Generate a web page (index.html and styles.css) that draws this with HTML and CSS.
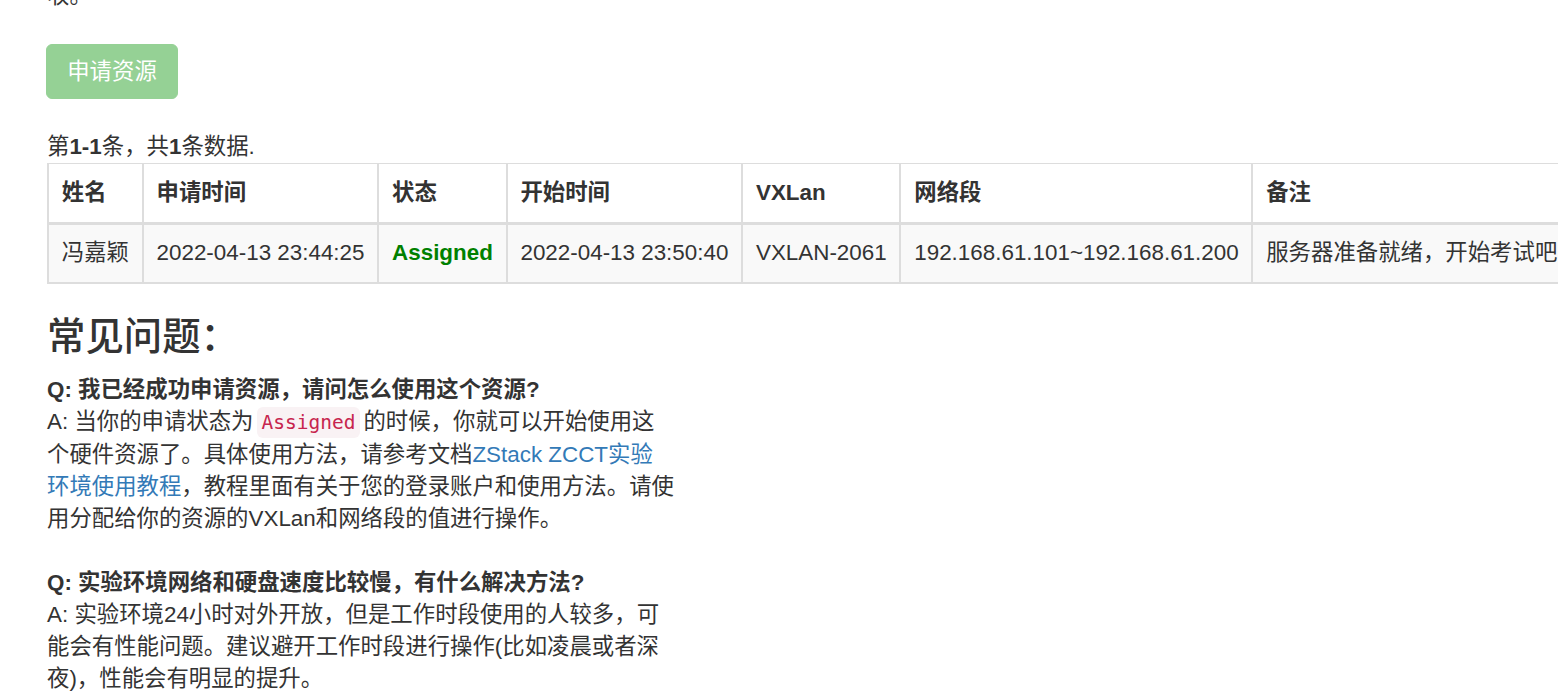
FILE: index.html
```html
<!DOCTYPE html>
<html lang="zh-CN">
<head>
<meta charset="utf-8">
<title>资源申请</title>
<link rel="stylesheet" href="styles.css">
</head>
<body>
<div class="page">
  <p class="intro">收。</p>
  <div class="actions">
    <button class="btn-apply" type="button" disabled>申请资源</button>
  </div>
  <div class="summary">第<b>1-1</b>条，共<b>1</b>条数据.</div>
  <table class="grid">
    <thead>
      <tr>
        <th>姓名</th>
        <th>申请时间</th>
        <th>状态</th>
        <th>开始时间</th>
        <th>VXLan</th>
        <th>网络段</th>
        <th>备注</th>
      </tr>
    </thead>
    <tbody>
      <tr>
        <td>冯嘉颖</td>
        <td>2022-04-13 23:44:25</td>
        <td><span class="st-assigned">Assigned</span></td>
        <td>2022-04-13 23:50:40</td>
        <td>VXLAN-2061</td>
        <td>192.168.61.101~192.168.61.200</td>
        <td>服务器准备就绪，开始考试吧</td>
      </tr>
    </tbody>
  </table>
  <h3 class="faq-title">常见问题：</h3>
  <div class="faq">
    <p><b>Q: 我已经成功申请资源，请问怎么使用这个资源?</b><br>A: 当你的申请状态为<code>Assigned</code>的时候，你就可以开始使用这个硬件资源了。具体使用方法，请参考文档<a href="#">ZStack ZCCT实验环境使用教程</a>，教程里面有关于您的登录账户和使用方法。请使用分配给你的资源的VXLan和网络段的值进行操作。<br><br><b>Q: 实验环境网络和硬盘速度比较慢，有什么解决方法?</b><br>A: 实验环境24小时对外开放，但是工作时段使用的人较多，可能会有性能问题。建议避开工作时段进行操作(比如凌晨或者深夜)，性能会有明显的提升。</p>
  </div>
</div>
</body>
</html>
```

FILE: styles.css
```css
html, body {
  margin: 0;
  padding: 0;
  background: #fff;
}
body {
  font-family: "Liberation Sans", "Noto Sans CJK SC", sans-serif;
  font-size: 22.4px;
  line-height: 32px;
  color: #333;
  overflow: hidden;
  width: 1558px;
  height: 698px;
}
.page {
  padding-left: 47px;
}
.intro {
  margin: -20px 0 0;
}
.actions {
  margin-top: 32px;
}
.btn-apply {
  box-sizing: border-box;
  font-family: "Liberation Sans", "Noto Sans CJK SC", sans-serif;
  font-size: 22.4px;
  line-height: 31px;
  padding: 11px 0;
  margin-left: -1px;
  color: #fff;
  background: #95d195;
  border: 1px solid #95d195;
  border-radius: 6px;
  cursor: not-allowed;
  display: block;
  width: 132px;
  height: 55px;
  white-space: nowrap;
  text-align: center;
}
.summary {
  margin-top: 32px;
}
.summary b {
  font-weight: 700;
}
.grid {
  border-collapse: collapse;
  margin-bottom: 32px;
}
.grid th,
.grid td {
  border: 2px solid #ddd;
  padding: 12.8px;
  line-height: 32px;
  text-align: left;
  white-space: nowrap;
}
.grid thead tr th {
  border-top-width: 1px;
}
.grid thead th {
  font-weight: 700;
  border-bottom: 3px solid #ddd;
}
.grid tbody tr {
  background: #f9f9f9;
}
.st-assigned {
  color: #008000;
  font-weight: 700;
}
.faq-title {
  font-size: 38.4px;
  line-height: 42.2px;
  font-weight: 500;
  margin: 0 0 16px;
}
.faq {
  width: 627.7px;
}
.faq p {
  margin: 0;
}
.faq b {
  font-weight: 700;
}
.faq a {
  color: #337ab7;
  text-decoration: none;
}
.faq code {
  font-family: "DejaVu Sans Mono", "Liberation Mono", monospace;
  font-size: 19.5px;
  color: #c7254e;
  background: #f9f2f4;
  padding: 4px 5px;
  margin: 0 3px;
  border-radius: 6px;
}
```
